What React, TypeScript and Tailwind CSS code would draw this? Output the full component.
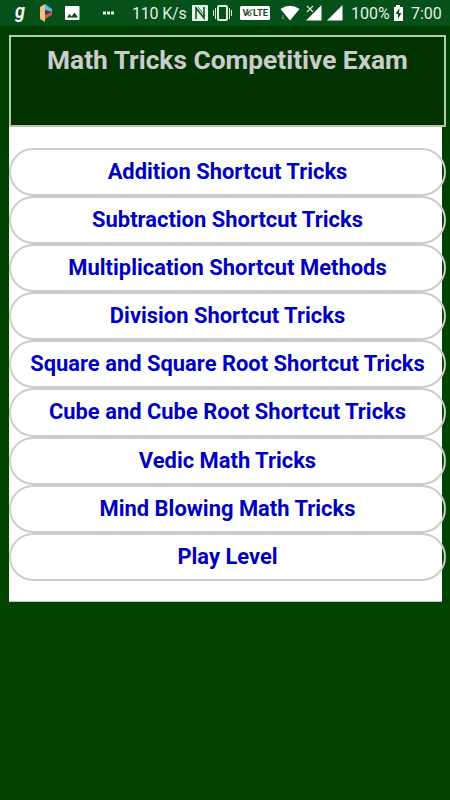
const topics = [
  "Addition Shortcut Tricks",
  "Subtraction Shortcut Tricks",
  "Multiplication Shortcut Methods",
  "Division Shortcut Tricks",
  "Square and Square Root Shortcut Tricks",
  "Cube and Cube Root Shortcut Tricks",
  "Vedic Math Tricks",
  "Mind Blowing Math Tricks",
  "Play Level",
];

export default function App() {
  return (
    <div className="h-[800px] w-[450px] overflow-hidden bg-gradient-to-b from-[#003c00] to-[#004400] to-40% font-['Roboto',sans-serif]">
      <StatusBar />
      <main className="ml-[9px] mt-[9px] h-[567px] w-[433px] border-b border-[#b9cbb9] bg-white">
        <header className="h-[92px] w-[437px] border-2 border-[#b5c8b0] bg-[#003300] pt-[7px] text-center">
          <h1 className="whitespace-nowrap text-[26.300px] font-bold leading-8 text-[#cccccc]">Math Tricks Competitive Exam</h1>
        </header>
        <nav className="mt-[21px] w-[437px]">
          {topics.map((topic) => (
            <button
              key={topic}
              className="flex h-[48.100px] w-full items-center justify-center whitespace-nowrap rounded-full border-2 border-[#cccccc] pt-[0.800px] text-[21.930px] font-bold text-[#0000c0]"
            >
              {topic}
            </button>
          ))}
        </nav>
      </main>
    </div>
  );
}

function StatusBar() {
  return (
    <div className="flex h-[26px] items-center bg-[#06501a] text-[16px] text-[#e2efe2]">
      <svg className="shrink-0" width="130" height="26" viewBox="0 0 130 26">
        <text x="15" y="17.500" fontSize="21" fontWeight="600" fontStyle="italic" textLength="10" lengthAdjust="spacingAndGlyphs" fill="#fff">
          g
        </text>
        <path d="M40 7l5-3v18l-5-3z" fill="#efc27d" />
        <path d="M45 4l7 5v4l-7-3z" fill="#60b5dc" />
        <path d="M45 10l7 2-7 4z" fill="#28415b" />
        <path d="M45 15l7-3v3l-7 4z" fill="#e45145" />
        <rect x="65" y="6" width="14.500" height="14" rx="1" fill="#fff" />
        <path d="M67 17.500l2.500-3.500 2 2.500 3-4 3.500 5z" fill="#06501a" />
        <path d="M103 11.500h3v3h-3zm4 0h3v3h-3zm4 0h3v3h-3z" fill="#e5f0e5" />
      </svg>
      <span className="w-[61px] shrink-0 whitespace-nowrap pl-[2px] pt-0.5 tracking-[-0.2px]">110 K/s</span>
      <svg className="shrink-0" width="159" height="26" viewBox="191 0 159 26">
        <rect x="192" y="5" width="16" height="16" rx="1" fill="#e5f3e7" />
        <path d="M196 19V8l8 10V7" fill="none" stroke="#06501a" strokeWidth="1.500" />
        <path d="M198 7l7 9" fill="none" stroke="#06501a" strokeWidth=".8" />
        <rect x="218" y="6" width="9" height="14" rx="1" fill="none" stroke="#d9eadb" strokeWidth="2" />
        <path d="M215.500 8v11M213.500 10v6M229.500 8v11M231.500 10v6" stroke="#d9eadb" />
        <rect x="240" y="6" width="30" height="14" rx="1.5" fill="#fff" />
        <text x="242.500" y="16.200" fontSize="9" fontWeight="700" fill="#174a20">V</text>
        <path d="M248 15c-1-4 3-4 3-1s-4 2-3-1 4-3 5-3" fill="none" stroke="#174a20" />
        <text x="253" y="16.200" fontSize="9" fontWeight="700" textLength="15" lengthAdjust="spacingAndGlyphs" fill="#174a20">
          LTE
        </text>
        <path d="M280.500 9Q290 2.500 299.500 9L290 20.500z" fill="#fff" />
        <path d="M283 15v4m-1.500-1.500L283 19l1.500-1.500" fill="none" stroke="#76a27e" strokeWidth=".8" />
        <path d="M321.500 5v15.500H306zM342.500 5v15.500H327z" fill="#fff" />
        <path d="M305 4h9v9h-9z" fill="#06501a" />
        <path d="M307 6l6 6m0-6l-6 6" stroke="#d9eadb" strokeWidth="1.200" />
      </svg>
      <span className="w-[42px] shrink-0 whitespace-nowrap pl-[1px] pt-0.5">100%</span>
      <svg className="shrink-0" width="19" height="26" viewBox="392 0 19 26">
        <path d="M394 7h2V5h4v2h3v14h-9z" fill="#fff" />
        <path d="M399.500 8l-4 6h2.500v5l3.500-6h-2.500z" fill="#06501a" />
      </svg>
      <span className="whitespace-nowrap pt-0.5">7:00</span>
    </div>
  );
}
